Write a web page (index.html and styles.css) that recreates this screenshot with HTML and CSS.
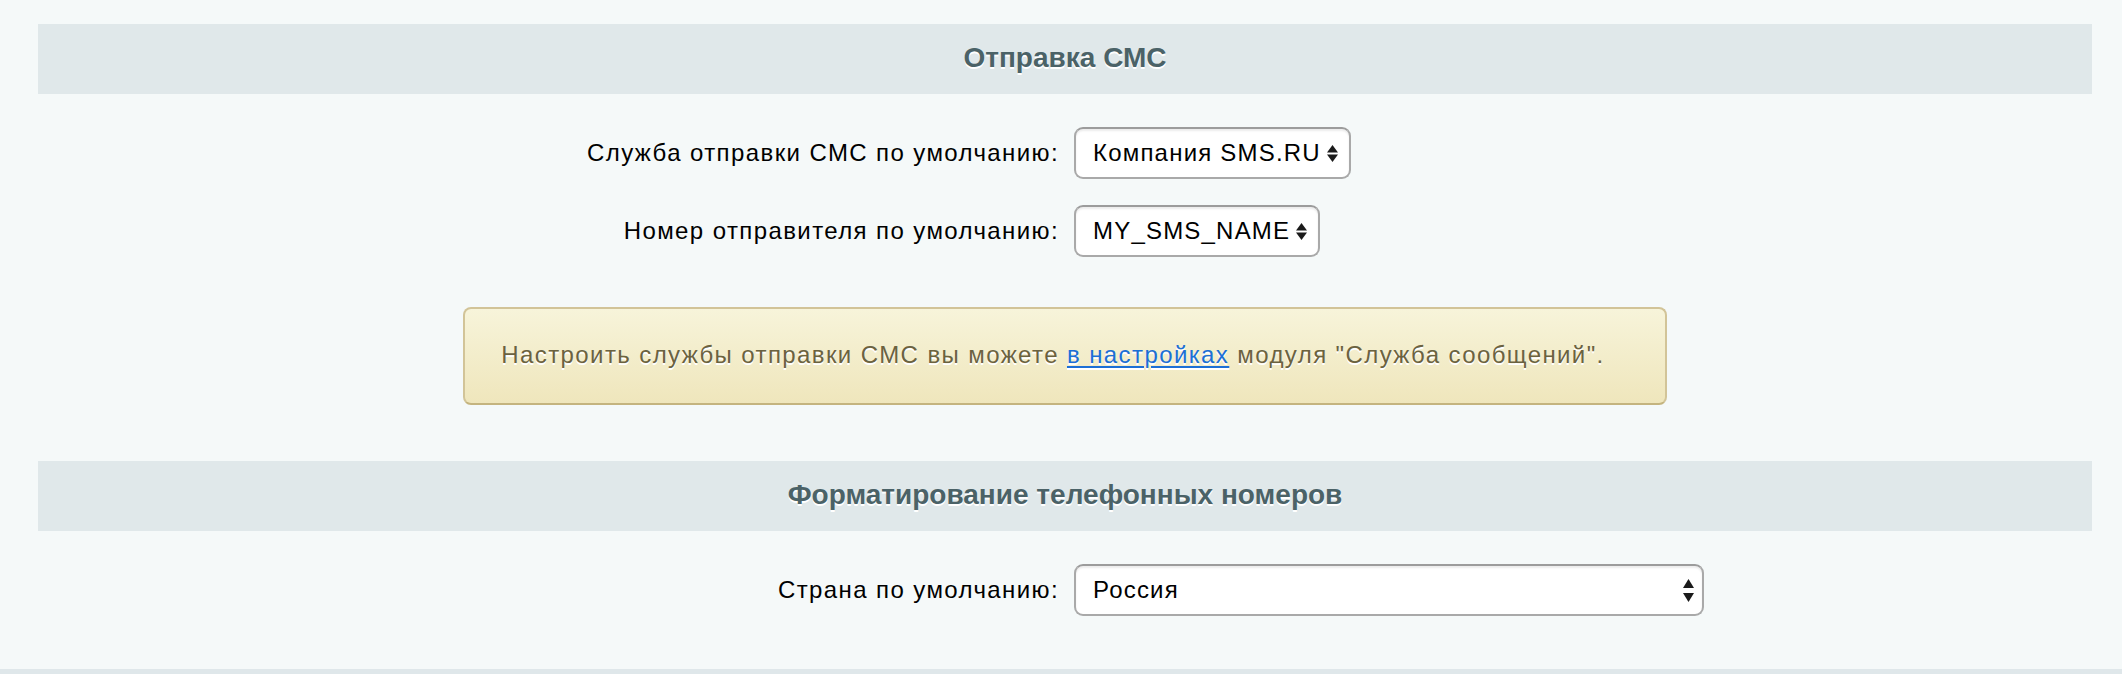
FILE: index.html
```html
<!DOCTYPE html>
<html lang="ru">
<head>
<meta charset="utf-8">
<title>Отправка СМС</title>
<link rel="stylesheet" href="styles.css">
</head>
<body>
<div class="page">
  <div class="content">
    <div class="heading">Отправка СМС</div>
    <div class="fields fields-first">
      <div class="row">
        <div class="label">Служба отправки СМС по умолчанию:</div>
        <div class="field">
          <div class="select">
            <span class="select-text">Компания SMS.RU</span>
            <svg class="arrows" width="11" height="17" viewBox="0 0 11 17"><path d="M5.5 0 L11 7.5 L0 7.5 Z" fill="#1a1a1a"/><path d="M0 9.5 L11 9.5 L5.5 17 Z" fill="#1a1a1a"/></svg>
          </div>
        </div>
      </div>
      <div class="row">
        <div class="label">Номер отправителя по умолчанию:</div>
        <div class="field">
          <div class="select">
            <span class="select-text">MY_SMS_NAME</span>
            <svg class="arrows" width="11" height="17" viewBox="0 0 11 17"><path d="M5.5 0 L11 7.5 L0 7.5 Z" fill="#1a1a1a"/><path d="M0 9.5 L11 9.5 L5.5 17 Z" fill="#1a1a1a"/></svg>
          </div>
        </div>
      </div>
    </div>
    <div class="notice-wrap">
      <div class="notice">Настроить службы отправки СМС вы можете <a href="#" class="notice-link">в настройках</a> модуля "Служба сообщений".</div>
    </div>
    <div class="heading">Форматирование телефонных номеров</div>
    <div class="fields fields-last">
      <div class="row">
        <div class="label">Страна по умолчанию:</div>
        <div class="field">
          <div class="select select-wide">
            <span class="select-text">Россия</span>
            <svg class="arrows" width="11" height="23" viewBox="0 0 11 23"><path d="M5.5 0 L11 9 L0 9 Z" fill="#1a1a1a"/><path d="M0 14 L11 14 L5.5 23 Z" fill="#1a1a1a"/></svg>
          </div>
        </div>
      </div>
    </div>
  </div>
</div>
</body>
</html>
```
FILE: styles.css
```css
* { box-sizing: border-box; }
html, body {
  margin: 0;
  padding: 0;
  background: #f5f9f9;
}
body {
  font-family: "Liberation Sans", Arial, sans-serif;
  color: #000;
}
.page {
  border-bottom: 5px solid #dfe7ea;
}
.content {
  padding: 24px 30px 0 38px;
}
.heading {
  height: 70px;
  background: #e0e8ea;
  color: #4b6267;
  font-weight: bold;
  font-size: 28px;
  text-align: center;
  display: flex;
  align-items: center;
  justify-content: center;
  padding-bottom: 2px;
  text-shadow: 0 2px 0 #fff;
}
.fields-first {
  padding-top: 33px;
  display: flex;
  flex-direction: column;
  gap: 26px;
}
.fields-last {
  padding-top: 33px;
  padding-bottom: 53px;
}
.row {
  display: grid;
  grid-template-columns: 1fr 1fr;
  align-items: center;
}
.label {
  text-align: right;
  padding-right: 6px;
  font-size: 24px;
  letter-spacing: 1.4px;
}
.field {
  padding-left: 9px;
  display: flex;
}
.select {
  height: 52px;
  display: inline-flex;
  align-items: center;
  gap: 6px;
  background: #fff;
  border: 2px solid #a9a9a9;
  border-top-color: #9c9c9c;
  border-radius: 9px;
  box-shadow: inset 0 2px 2px rgba(0,0,0,0.08);
  padding: 0 11px 0 17px;
  font-size: 24px;
  letter-spacing: 1.2px;
  color: #000;
}
.select-wide {
  width: 630px;
  justify-content: space-between;
  padding-right: 8px;
}
.arrows {
  display: block;
  flex: none;
}
.notice-wrap {
  padding-top: 50px;
  padding-bottom: 56px;
  display: flex;
  justify-content: center;
}
.notice {
  height: 98px;
  display: flex;
  align-items: center;
  padding: 0 60px 2px 36px;
  border: 2px solid #d2c498;
  border-bottom-color: #c4b47f;
  border-radius: 8px;
  background: linear-gradient(to bottom, #f7f4da, #efe6bc);
  color: #6b6240;
  font-size: 24px;
  letter-spacing: 1.4px;
  text-shadow: 0 2px 0 #fff;
  white-space: pre;
}
.notice-link {
  color: #1c6fd6;
  text-decoration: underline;
  text-underline-offset: 3px;
}
```
